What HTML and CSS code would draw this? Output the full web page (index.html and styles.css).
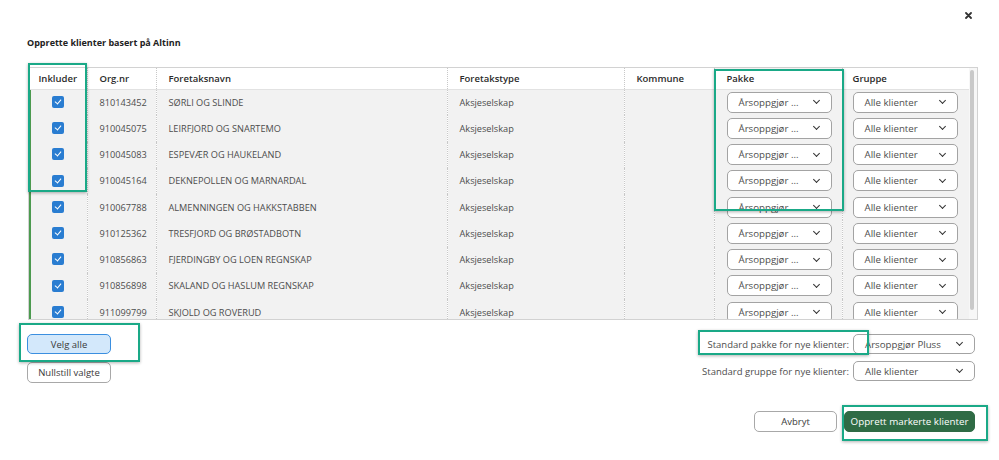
FILE: index.html
```html
<!DOCTYPE html>
<html lang="no">
<head>
    <meta charset="UTF-8">
    <title>Opprette klienter basert på Altinn</title>
    <link rel="stylesheet" href="styles.css">
</head>
<body>
    <div class="dialog">
        <div class="dialog-top">
            <button class="close" type="button" aria-label="Lukk">
                <svg width="7" height="7" viewBox="0 0 7 7"><path d="M1 1L6 6M6 1L1 6" stroke="#333" stroke-width="1.8" stroke-linecap="round"/></svg>
            </button>
        </div>

        <h2 class="dialog-title">Opprette klienter basert på Altinn</h2>

        <div class="grid">
            <div class="grid-scroll">
                <table class="client-table">
                    <colgroup>
                        <col style="width:58px">
                        <col style="width:69px">
                        <col style="width:291px">
                        <col style="width:177px">
                        <col style="width:90px">
                        <col style="width:128px">
                        <col style="width:127px">
                    </colgroup>
                    <thead>
                        <tr>
                            <th class="center">Inkluder</th>
                            <th>Org.nr</th>
                            <th>Foretaksnavn</th>
                            <th>Foretakstype</th>
                            <th>Kommune</th>
                            <th>Pakke</th>
                            <th>Gruppe</th>
                        </tr>
                    </thead>
                    <tbody>
                        <tr>
                            <td class="center"><span class="check"></span></td>
                            <td>810143452</td>
                            <td>SØRLI OG SLINDE</td>
                            <td>Aksjeselskap</td>
                            <td></td>
                            <td><span class="select">Årsoppgjør ...<i class="chev"></i></span></td>
                            <td><span class="select">Alle klienter<i class="chev"></i></span></td>
                        </tr>
                        <tr>
                            <td class="center"><span class="check"></span></td>
                            <td>910045075</td>
                            <td>LEIRFJORD OG SNARTEMO</td>
                            <td>Aksjeselskap</td>
                            <td></td>
                            <td><span class="select">Årsoppgjør ...<i class="chev"></i></span></td>
                            <td><span class="select">Alle klienter<i class="chev"></i></span></td>
                        </tr>
                        <tr>
                            <td class="center"><span class="check"></span></td>
                            <td>910045083</td>
                            <td>ESPEVÆR OG HAUKELAND</td>
                            <td>Aksjeselskap</td>
                            <td></td>
                            <td><span class="select">Årsoppgjør ...<i class="chev"></i></span></td>
                            <td><span class="select">Alle klienter<i class="chev"></i></span></td>
                        </tr>
                        <tr>
                            <td class="center"><span class="check"></span></td>
                            <td>910045164</td>
                            <td>DEKNEPOLLEN OG MARNARDAL</td>
                            <td>Aksjeselskap</td>
                            <td></td>
                            <td><span class="select">Årsoppgjør ...<i class="chev"></i></span></td>
                            <td><span class="select">Alle klienter<i class="chev"></i></span></td>
                        </tr>
                        <tr>
                            <td class="center"><span class="check"></span></td>
                            <td>910067788</td>
                            <td>ALMENNINGEN OG HAKKSTABBEN</td>
                            <td>Aksjeselskap</td>
                            <td></td>
                            <td><span class="select">Årsoppgjør ...<i class="chev"></i></span></td>
                            <td><span class="select">Alle klienter<i class="chev"></i></span></td>
                        </tr>
                        <tr>
                            <td class="center"><span class="check"></span></td>
                            <td>910125362</td>
                            <td>TRESFJORD OG BRØSTADBOTN</td>
                            <td>Aksjeselskap</td>
                            <td></td>
                            <td><span class="select">Årsoppgjør ...<i class="chev"></i></span></td>
                            <td><span class="select">Alle klienter<i class="chev"></i></span></td>
                        </tr>
                        <tr>
                            <td class="center"><span class="check"></span></td>
                            <td>910856863</td>
                            <td>FJERDINGBY OG LOEN REGNSKAP</td>
                            <td>Aksjeselskap</td>
                            <td></td>
                            <td><span class="select">Årsoppgjør ...<i class="chev"></i></span></td>
                            <td><span class="select">Alle klienter<i class="chev"></i></span></td>
                        </tr>
                        <tr>
                            <td class="center"><span class="check"></span></td>
                            <td>910856898</td>
                            <td>SKALAND OG HASLUM REGNSKAP</td>
                            <td>Aksjeselskap</td>
                            <td></td>
                            <td><span class="select">Årsoppgjør ...<i class="chev"></i></span></td>
                            <td><span class="select">Alle klienter<i class="chev"></i></span></td>
                        </tr>
                        <tr>
                            <td class="center"><span class="check"></span></td>
                            <td>911099799</td>
                            <td>SKJOLD OG ROVERUD</td>
                            <td>Aksjeselskap</td>
                            <td></td>
                            <td><span class="select">Årsoppgjør ...<i class="chev"></i></span></td>
                            <td><span class="select">Alle klienter<i class="chev"></i></span></td>
                        </tr>
                    </tbody>
                </table>
            </div>
            <div class="scrollbar"><div class="thumb"></div></div>
        </div>

        <div class="options">
            <div class="select-buttons">
                <button class="btn btn-active" type="button">Velg alle</button>
                <button class="btn" type="button">Nullstill valgte</button>
            </div>
            <div class="defaults">
                <div class="default-row">
                    <label>Standard pakke for nye klienter:</label>
                    <span class="select select-wide">Årsoppgjør Pluss<i class="chev"></i></span>
                </div>
                <div class="default-row">
                    <label>Standard gruppe for nye klienter:</label>
                    <span class="select select-wide">Alle klienter<i class="chev"></i></span>
                </div>
            </div>
        </div>

        <div class="actions">
            <button class="btn btn-cancel" type="button">Avbryt</button>
            <button class="btn btn-primary" type="button">Opprett markerte klienter</button>
        </div>
    </div>

    <!-- annotation boxes -->
    <div class="mark mark-include"></div>
    <div class="mark mark-pakke"></div>
    <div class="mark mark-velg"></div>
    <div class="mark mark-standard"></div>
    <div class="mark mark-opprett"></div>
</body>
</html>
```

FILE: styles.css
```css
:root {
    --text-color: #4d4d4d;
    --head-color: #2b2b2b;
    --row-bg: #f2f2f2;
    --line-color: #d2d2d2;
    --field-border: #a3a3a3;
    --check-color: #2a7dd1;
    --primary-color: #2f6b45;
    --mark-color: #1aa987;
}

* {
    margin: 0;
    padding: 0;
    box-sizing: border-box;
}

body {
    font-family: "Open Sans", "Noto Sans", sans-serif;
    font-size: 9.2px;
    color: var(--text-color);
    background-color: white;
    width: 999px;
    height: 460px;
    overflow: hidden;
    position: relative;
}

button {
    font-family: inherit;
    font-size: inherit;
    cursor: pointer;
}

.dialog {
    display: flex;
    flex-direction: column;
    padding: 0 21px 0 28px;
}

.dialog-top {
    height: 30px;
    display: flex;
    justify-content: flex-end;
    align-items: center;
}

.close {
    border: none;
    background: none;
    width: 7px;
    height: 7px;
    display: flex;
    margin-right: 6px;
}

.dialog-title {
    font-size: 9px;
    font-weight: 700;
    color: #222;
    line-height: 14px;
    margin: 6px 0 17px -1px;
}

/* grid */

.grid {
    display: flex;
    border: 1px solid var(--line-color);
    height: 253px;
}

.grid-scroll {
    width: 940px;
    height: 251px;
    overflow: hidden;
}

.client-table {
    width: 940px;
    table-layout: fixed;
    border-collapse: collapse;
}

.client-table th {
    height: 21px;
    text-align: left;
    font-weight: 600;
    font-size: 9.5px;
    color: var(--head-color);
    background: white;
    border-bottom: 1px solid #e2e2e2;
    padding: 0 0 0 12px;
}

.client-table td {
    height: 26.25px;
    padding: 0 0 0 12px;
    background: var(--row-bg);
    white-space: nowrap;
    overflow: hidden;
}

.client-table th:last-child,
.client-table td:last-child {
    padding-left: 10px;
}

.client-table th + th,
.client-table td + td {
    border-left: 1px dotted #c8c8c8;
}

.client-table td:first-child {
    box-shadow: inset 2px 0 0 #4c9a4f;
}

.client-table .center {
    text-align: center;
    padding: 0;
}

.check {
    display: inline-block;
    width: 12px;
    height: 12px;
    border-radius: 2px;
    background: var(--check-color);
    vertical-align: middle;
    position: relative;
    top: -1px;
}

.check::after {
    content: "";
    position: absolute;
    left: 4px;
    top: 2px;
    width: 3px;
    height: 5px;
    border: solid white;
    border-width: 0 1.5px 1.5px 0;
    transform: rotate(40deg);
}

.select {
    display: inline-flex;
    align-items: center;
    justify-content: space-between;
    width: 105px;
    height: 21px;
    padding: 0 12px 0 11px;
    border: 1px solid var(--field-border);
    border-radius: 5px;
    background: white;
    color: var(--text-color);
    font-size: 9.7px;
    vertical-align: middle;
}

.chev {
    width: 5px;
    height: 5px;
    border: solid #333;
    border-width: 0 1.5px 1.5px 0;
    transform: rotate(45deg);
    margin-top: -3px;
}

.scrollbar {
    width: 8px;
    padding: 2px 0 0 1px;
    background: #f7f7f7;
}

.thumb {
    width: 4px;
    height: 240px;
    background: #c9c9c9;
    border-radius: 2px;
}

/* below grid */

.options {
    display: flex;
    justify-content: space-between;
    margin-top: 14px;
    padding-right: 3px;
}

.select-buttons {
    display: flex;
    flex-direction: column;
    gap: 8px;
    margin-left: -1px;
}

.btn {
    width: 84px;
    height: 21px;
    border: 1px solid #a8a8a8;
    border-radius: 5px;
    background: white;
    color: #3a3a3a;
    font-size: 9.5px;
}

.btn-active {
    height: 20px;
    background: #d3e8fb;
    border-color: #3b8fe0;
}

.defaults {
    display: flex;
    flex-direction: column;
    gap: 7px;
}

.default-row {
    display: flex;
    align-items: center;
    justify-content: flex-end;
    gap: 4px;
}

.default-row label {
    font-size: 9.5px;
    color: var(--text-color);
}

.select-wide {
    width: 122px;
    height: 20px;
    padding-right: 12px;
}

.actions {
    display: flex;
    justify-content: flex-end;
    gap: 7px;
    margin-top: 28px;
    padding-right: 3px;
}

.btn-cancel {
    width: 83px;
}

.btn-primary {
    width: 131px;
    background: var(--primary-color);
    border-color: var(--primary-color);
    color: white;
    font-weight: 500;
    font-size: 9.8px;
}

/* annotation boxes drawn over the dialog */

.mark {
    position: absolute;
    border: 2px solid var(--mark-color);
    box-shadow: 0 1px 3px rgba(0, 0, 0, 0.3);
    pointer-events: none;
}

.mark-include {
    left: 28px;
    top: 63px;
    width: 59px;
    height: 129px;
}

.mark-pakke {
    left: 714px;
    top: 69px;
    width: 130px;
    height: 142px;
}

.mark-velg {
    left: 19px;
    top: 323px;
    width: 121px;
    height: 39px;
}

.mark-standard {
    left: 698px;
    top: 330px;
    width: 171px;
    height: 25px;
}

.mark-opprett {
    left: 842px;
    top: 405px;
    width: 146px;
    height: 36px;
}
```
